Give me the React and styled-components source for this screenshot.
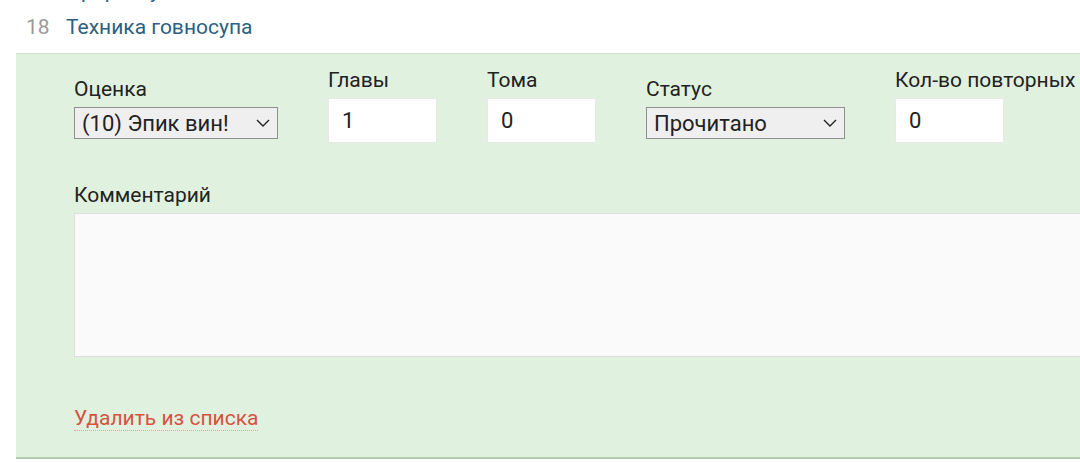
import React from 'react';
import styled, { createGlobalStyle } from 'styled-components';

const GlobalStyle = createGlobalStyle`
  html, body {
    margin: 0;
    padding: 0;
    background: #fff;
    overflow: hidden;
  }
  body {
    font-family: Roboto, "Noto Sans", "Liberation Sans", sans-serif;
    font-size: 21px;
    color: #222;
  }
`;

const Page = styled.div`
  width: 1080px;
  height: 462px;
  overflow: hidden;
`;

const Row = styled.div`
  display: flex;
  align-items: baseline;
  gap: 20px;
  padding-left: 26px;
  height: 24px;
  line-height: 24px;
  margin-top: ${(p) => p.$top || 0}px;
`;

const Num = styled.span`
  color: #9a9a9a;
  width: 20px;
`;

const Title = styled.span`
  color: #2c5f80;
`;

const Panel = styled.div`
  margin: 14px 0 0 16px;
  width: 1200px;
  background: #e1f1df;
  border-top: 1px solid #cfe4cc;
  border-bottom: 2px solid #b2ccaf;
  padding: 14px 0 26px 58px;
  box-sizing: border-box;
`;

const Fields = styled.div`
  display: flex;
  align-items: flex-end;
  gap: 50px;
`;

const Field = styled.div`
  display: flex;
  flex-direction: column;
  width: ${(p) => p.$w}px;
  margin-bottom: ${(p) => (p.$select ? 4 : 0)}px;
`;

const Label = styled.label`
  line-height: 24px;
  white-space: nowrap;
  margin-bottom: 6px;
`;

const SelectWrap = styled.div`
  position: relative;
  height: 32px;
`;

const Select = styled.select`
  appearance: none;
  width: 100%;
  height: 32px;
  margin: 0;
  padding: 0 0 0 7px;
  border: 1px solid #8f8f8f;
  border-radius: 0;
  background: #efefef;
  font: inherit;
  font-size: 22px;
  color: #222;
  box-sizing: border-box;
`;

const Chevron = styled.svg`
  position: absolute;
  right: 8px;
  top: 12px;
  width: 14px;
  height: 8px;
  pointer-events: none;
`;

const Input = styled.input`
  width: 100%;
  height: 45px;
  margin: 0;
  padding: 0 13px;
  border: 1px solid #e6e9e6;
  background: #fff;
  font: inherit;
  font-size: 22px;
  color: #222;
  box-sizing: border-box;
  outline: none;
`;

const CommentLabel = styled(Label)`
  display: block;
  margin-top: 40px;
`;

const TextArea = styled.textarea`
  display: block;
  width: 1120px;
  height: 144px;
  margin: 0;
  border: 1px solid #dedede;
  background: #fafafa;
  box-sizing: border-box;
  resize: none;
  font: inherit;
`;

const Remove = styled.a`
  display: inline-block;
  margin-top: 50px;
  line-height: 23px;
  color: #d4543f;
  text-decoration: none;
  border-bottom: 1px dotted #e4a59b;
`;

const SelectField = ({ w, label, value }) => (
  <Field $w={w} $select>
    <Label>{label}</Label>
    <SelectWrap>
      <Select defaultValue={value}>
        <option>{value}</option>
      </Select>
      <Chevron viewBox="0 0 14 8">
        <polyline points="1,1 7,7 13,1" fill="none" stroke="#222" strokeWidth="1.4" />
      </Chevron>
    </SelectWrap>
  </Field>
);

const InputField = ({ w, label, value }) => (
  <Field $w={w}>
    <Label>{label}</Label>
    <Input defaultValue={value} />
  </Field>
);

const App = () => (
  <Page>
    <GlobalStyle />
    <Row $top={-21}>
      <Num />
      <Title>Прорыв у</Title>
    </Row>
    <Row $top={12}>
      <Num>18</Num>
      <Title>Техника говносупа</Title>
    </Row>
    <Panel>
      <Fields>
        <SelectField w={204} label="Оценка" value="(10) Эпик вин!" />
        <InputField w={109} label="Главы" value="1" />
        <InputField w={109} label="Тома" value="0" />
        <SelectField w={199} label="Статус" value="Прочитано" />
        <InputField w={109} label="Кол-во повторных" value="0" />
      </Fields>
      <CommentLabel>Комментарий</CommentLabel>
      <TextArea />
      <Remove href="#">Удалить из списка</Remove>
    </Panel>
  </Page>
);

export default App;
